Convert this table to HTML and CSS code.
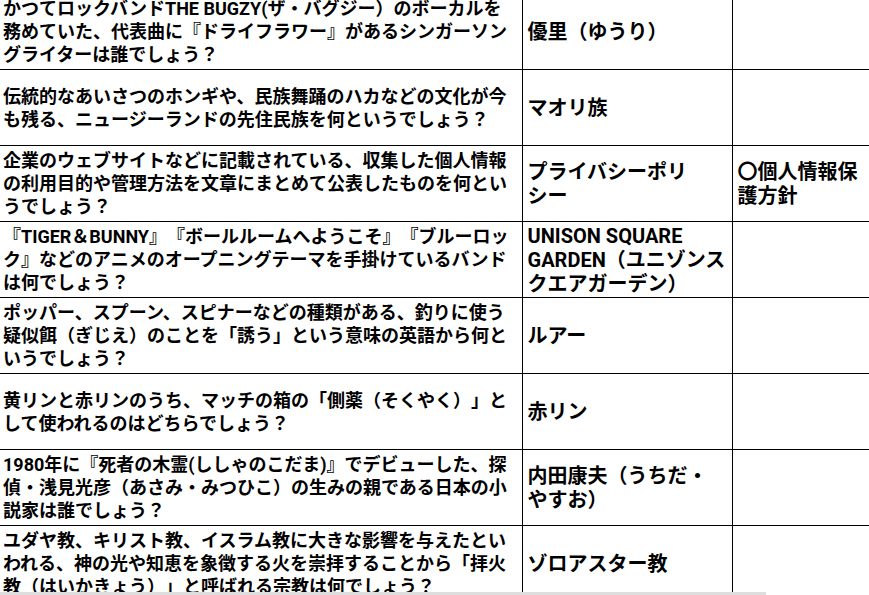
FILE: index.html
```html
<!DOCTYPE html>
<html lang="ja">
<head>
<meta charset="utf-8">
<title>クイズ</title>
<link rel="stylesheet" href="styles.css">
</head>
<body>
<table class="quiz">
  <colgroup>
    <col class="c-q">
    <col class="c-a">
    <col class="c-alt">
  </colgroup>
  <tbody>
    <tr>
      <td class="q">かつてロックバンドTHE BUGZY(ザ・バグジー）のボーカルを務めていた、代表曲に『ドライフラワー』があるシンガーソングライターは誰でしょう？</td>
      <td class="a">優里（ゆうり）</td>
      <td class="alt"></td>
    </tr>
    <tr>
      <td class="q">伝統的なあいさつのホンギや、民族舞踊のハカなどの文化が今も残る、ニュージーランドの先住民族を何というでしょう？</td>
      <td class="a">マオリ族</td>
      <td class="alt"></td>
    </tr>
    <tr>
      <td class="q">企業のウェブサイトなどに記載されている、収集した個人情報の利用目的や管理方法を文章にまとめて公表したものを何というでしょう？</td>
      <td class="a">プライバシーポリシー</td>
      <td class="alt">〇個人情報保護方針</td>
    </tr>
    <tr>
      <td class="q">『TIGER＆BUNNY』『ボールルームへようこそ』『ブルーロック』などのアニメのオープニングテーマを手掛けているバンドは何でしょう？</td>
      <td class="a">UNISON SQUARE GARDEN（ユニゾンスクエアガーデン）</td>
      <td class="alt"></td>
    </tr>
    <tr>
      <td class="q">ポッパー、スプーン、スピナーなどの種類がある、釣りに使う疑似餌（ぎじえ）のことを「誘う」という意味の英語から何というでしょう？</td>
      <td class="a">ルアー</td>
      <td class="alt"></td>
    </tr>
    <tr>
      <td class="q">黄リンと赤リンのうち、マッチの箱の「側薬（そくやく）」として使われるのはどちらでしょう？</td>
      <td class="a">赤リン</td>
      <td class="alt"></td>
    </tr>
    <tr>
      <td class="q">1980年に『死者の木霊(ししゃのこだま)』でデビューした、探偵・浅見光彦（あさみ・みつひこ）の生みの親である日本の小説家は誰でしょう？</td>
      <td class="a">内田康夫（うちだ・やすお）</td>
      <td class="alt"></td>
    </tr>
    <tr>
      <td class="q">ユダヤ教、キリスト教、イスラム教に大きな影響を与えたといわれる、神の光や知恵を象徴する火を崇拝することから「拝火教（はいかきょう）」と呼ばれる宗教は何でしょう？</td>
      <td class="a">ゾロアスター教</td>
      <td class="alt"></td>
    </tr>
  </tbody>
</table>
<div class="hscroll"></div>
</body>
</html>
```
FILE: styles.css
```css
html, body {
  margin: 0;
  padding: 0;
  background: #fff;
  overflow: hidden;
}

body {
  font-family: Roboto, "Noto Sans CJK JP", sans-serif;
  font-weight: 700;
  color: #000;
  line-break: strict;
  text-spacing-trim: space-all;
}

.quiz {
  border-collapse: collapse;
  table-layout: fixed;
  width: 882px;
  margin-top: -7px;
}

.c-q { width: 522px; }
.c-a { width: 210px; }
.c-alt { width: 150px; }

.quiz td {
  border: 1px solid #000;
  height: 76px;
  padding: 0 5px;
  vertical-align: middle;
  box-sizing: border-box;
}

.quiz td.q {
  border-left: none;
  padding: 0 8px 0 3px;
  font-size: 18px;
  line-height: 23px;
}

.quiz td.a,
.quiz td.alt {
  font-size: 20px;
  line-height: 24px;
}

.hscroll {
  position: fixed;
  left: 0;
  bottom: 0;
  width: 766px;
  height: 3px;
  background: #dedede;
}
```
